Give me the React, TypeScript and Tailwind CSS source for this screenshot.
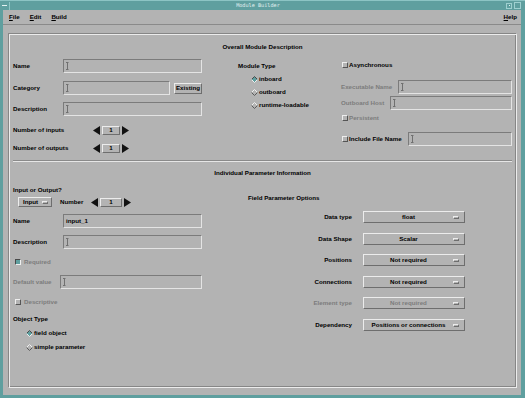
import React from "react";

const DIM = "text-[#7c7c7c]";

function IBeam() {
  return (
    <svg width="3" height="8" viewBox="0 0 3 8" className="ml-[2px] shrink-0">
      <path d="M0 0.5H2.5M1.5 0.5V7.5M0 7.5H2.5" stroke="#707070" strokeWidth="1" fill="none" />
    </svg>
  );
}

function Field({ className, value }: { className: string; value?: string }) {
  return (
    <div
      className={`h-[14px] flex items-center border border-t-[#7b7b7b] border-l-[#7b7b7b] border-b-[#e4e4e4] border-r-[#e4e4e4] ${className}`}
    >
      {value ? <span className="ml-[2px]">{value}</span> : <IBeam />}
    </div>
  );
}

function Radio({ on }: { on?: boolean }) {
  return (
    <svg width="7" height="7" viewBox="0 0 7 7" className="shrink-0">
      <polygon points="3.5,0.5 6.5,3.5 3.5,6.5 0.5,3.5" fill={on ? "#5f9f9f" : "#b3b3b3"} />
      <polyline points="0.5,3.5 3.5,0.5 6.5,3.5" stroke={on ? "#4a4a4a" : "#f0f0f0"} fill="none" />
      <polyline points="0.5,3.5 3.5,6.5 6.5,3.5" stroke={on ? "#f0f0f0" : "#5a5a5a"} fill="none" />
    </svg>
  );
}

function Check({ on }: { on?: boolean }) {
  return (
    <span
      className={`w-[6px] h-[6px] shrink-0 border ${
        on
          ? "bg-[#5f9f9f] border-t-[#4a4a4a] border-l-[#4a4a4a] border-b-[#eeeeee] border-r-[#eeeeee]"
          : "bg-[#b3b3b3] border-t-[#eeeeee] border-l-[#eeeeee] border-b-[#555555] border-r-[#555555]"
      }`}
    />
  );
}

function OptionMenu({ label, className, dim, ind = "mr-[5px]" }: { label: string; className: string; dim?: boolean; ind?: string }) {
  return (
    <div
      className={`flex items-center border border-t-[#ececec] border-l-[#ececec] border-b-[#6e6e6e] border-r-[#6e6e6e] ${className}`}
    >
      <span className={`flex-1 text-center whitespace-nowrap ${dim ? DIM : ""}`}>{label}</span>
      <span className={`w-[6px] h-[3px] shrink-0 border border-t-[#ececec] border-l-[#ececec] border-b-[#6e6e6e] border-r-[#6e6e6e] ${ind}`} />
    </div>
  );
}

function Spin({ box }: { box: string }) {
  return (
    <div className="flex items-center">
      <svg width="7" height="9" viewBox="0 0 7 9">
        <polygon points="7,0 7,9 0,4.5" fill="#111" />
      </svg>
      <div
        className={`ml-[2px] h-[9px] flex items-center justify-center border border-t-[#ececec] border-l-[#ececec] border-b-[#6e6e6e] border-r-[#6e6e6e] ${box}`}
      >
        1
      </div>
      <svg width="7" height="9" viewBox="0 0 7 9" className="ml-[2px]">
        <polygon points="0,0 0,9 7,4.5" fill="#111" />
      </svg>
    </div>
  );
}

function U({ c, rest }: { c: string; rest: string }) {
  return (
    <span>
      <span className="underline underline-offset-[1px]">{c}</span>
      {rest}
    </span>
  );
}

export default function App() {
  return (
    <div className="w-[525px] h-[398px] bg-[#5f9f9f] flex flex-col overflow-hidden font-['Liberation_Sans',Arial,Helvetica,sans-serif] font-bold text-[6.2px] leading-none text-black">
      {/* title bar */}
      <div className="h-[10px] flex items-center shrink-0 border-t border-t-[#8cc4c4]">
        <div className="w-[10px] h-[8px] flex items-center justify-center border-r border-r-[#8cc4c4]">
          <span className="w-[5px] h-[1px] bg-[#e4f2f2]" />
        </div>
        <div className="flex-1 text-center font-['DejaVu_Sans_Mono',monospace] font-normal text-[5.2px] text-[#e2f0f0]">
          Module Builder
        </div>
        <div className="flex items-center gap-[2px] mr-[4px]">
          <span className="w-[6px] h-[6px] border border-[#9fd0d0] flex items-center justify-center">
            <span className="w-[1px] h-[1px] bg-[#e4f2f2]" />
          </span>
          <span className="w-[7px] h-[7px] border border-[#9fd0d0]" />
        </div>
      </div>

      {/* client */}
      <div className="flex-1 ml-[3px] mr-[4px] mb-[3px] bg-[#b3b3b3] flex flex-col">
        {/* menu bar */}
        <div className="h-[15px] shrink-0 flex items-center pl-[6px] pr-[4px] gap-[10px] border-b border-b-[#8a8a8a]">
          <U c="F" rest="ile" />
          <U c="E" rest="dit" />
          <U c="B" rest="uild" />
          <span className="ml-auto">
            <U c="H" rest="elp" />
          </span>
        </div>

        <div className="flex-1 pt-[8px] pl-[5px] pr-[4px] pb-[7px] flex">
          <div className="flex-1 flex flex-col border border-t-[#868686] border-l-[#868686] border-b-[#ececec] border-r-[#ececec] shadow-[inset_1px_1px_0_#ececec,inset_-1px_-1px_0_#868686]">
            {/* Section 1 */}
            <div className="mt-[9px] h-[8px] flex items-center justify-center">Overall Module Description</div>

            <div className="mt-[8px] flex pl-[4px]">
              <div className="w-[189px] flex flex-col">
                <div className="h-[14px] flex items-center">
                  <span className="w-[50px]">Name</span>
                  <Field className="w-[139px]" />
                </div>
                <div className="mt-[8px] h-[14px] flex items-center">
                  <span className="w-[50px]">Category</span>
                  <Field className="w-[107px]" />
                  <div className="ml-[4px] w-[28px] h-[11px] flex items-center justify-center border border-t-[#ececec] border-l-[#ececec] border-b-[#6e6e6e] border-r-[#6e6e6e]">
                    Existing
                  </div>
                </div>
                <div className="mt-[7px] h-[14px] flex items-center">
                  <span className="w-[50px]">Description</span>
                  <Field className="w-[139px]" />
                </div>
                <div className="mt-[9px] h-[10px] flex items-center">
                  <span className="w-[80px]">Number of inputs</span>
                  <Spin box="w-[18px]" />
                </div>
                <div className="mt-[8px] h-[10px] flex items-center">
                  <span className="w-[80px]">Number of outputs</span>
                  <Spin box="w-[18px]" />
                </div>
              </div>

              <div className="ml-[36px] w-[103px] flex flex-col">
                <div className="h-[14px] flex items-center">Module Type</div>
                <div className="h-[13px] flex items-center pl-[13px] gap-[1px]">
                  <Radio on />
                  <span>inboard</span>
                </div>
                <div className="h-[13px] flex items-center pl-[13px] gap-[1px]">
                  <Radio />
                  <span>outboard</span>
                </div>
                <div className="h-[13px] flex items-center pl-[13px] gap-[1px]">
                  <Radio />
                  <span>runtime-loadable</span>
                </div>
              </div>

              <div className="w-[171px] flex flex-col">
                <div className="h-[12px] flex items-center gap-[1px] pl-[1px]">
                  <Check />
                  <span>Asynchronous</span>
                </div>
                <div className="mt-[9px] h-[14px] flex items-center">
                  <span className={`w-[57px] ${DIM}`}>Executable Name</span>
                  <Field className="w-[114px]" />
                </div>
                <div className="mt-[2px] h-[14px] flex items-center">
                  <span className={`w-[49px] ${DIM}`}>Outboard Host</span>
                  <Field className="w-[122px]" />
                </div>
                <div className="mt-[2px] h-[12px] flex items-center gap-[1px] pl-[1px]">
                  <Check />
                  <span className={DIM}>Persistent</span>
                </div>
                <div className="mt-[8px] h-[14px] flex items-center gap-[1px] pl-[1px]">
                  <Check />
                  <span>Include File Name</span>
                  <Field className="ml-auto w-[104px]" />
                </div>
              </div>
            </div>

            <div className="mt-[7px] mx-[4px] h-[2px] border-t border-t-[#8a8a8a] border-b border-b-[#e6e6e6]" />

            {/* Section 2 */}
            <div className="mt-[7px] h-[8px] flex items-center justify-center">Individual Parameter Information</div>

            <div className="mt-[9px] flex pl-[4px]">
              <div className="w-[189px] flex flex-col">
                <div className="h-[8px] flex items-center">Input or Output?</div>
                <div className="mt-[3px] h-[10px] flex items-center">
                  <OptionMenu label="Input" className="ml-[5px] w-[34px] h-[10px]" ind="mr-[3px]" />
                  <span className="ml-[8px] w-[31px]">Number</span>
                  <Spin box="w-[22px]" />
                </div>
                <div className="mt-[7px] h-[14px] flex items-center">
                  <span className="w-[50px]">Name</span>
                  <Field className="w-[139px]" value="input_1" />
                </div>
                <div className="mt-[7px] h-[14px] flex items-center">
                  <span className="w-[50px]">Description</span>
                  <Field className="w-[139px]" />
                </div>
                <div className="mt-[8px] h-[10px] flex items-center pl-[2px] gap-[3px]">
                  <Check on />
                  <span className={DIM}>Required</span>
                </div>
                <div className="mt-[8px] h-[14px] flex items-center">
                  <span className={`w-[47px] ${DIM}`}>Default value</span>
                  <Field className="w-[142px]" />
                </div>
                <div className="mt-[8px] h-[10px] flex items-center pl-[2px] gap-[3px]">
                  <Check />
                  <span className={DIM}>Descriptive</span>
                </div>
                <div className="mt-[8px] h-[8px] flex items-center">Object Type</div>
                <div className="mt-[5px] h-[10px] flex items-center pl-[13px] gap-[1px]">
                  <Radio on />
                  <span>field object</span>
                </div>
                <div className="mt-[4px] h-[10px] flex items-center pl-[13px] gap-[1px]">
                  <Radio />
                  <span>simple parameter</span>
                </div>
              </div>

              <div className="ml-[46px] w-[217px] flex flex-col">
                <div className="mt-[8px] h-[8px] flex items-center">Field Parameter Options</div>
                {[
                  { l: "Data type", v: "float", mt: "mt-[9px]" },
                  { l: "Data Shape", v: "Scalar", mt: "mt-[10px]" },
                  { l: "Positions", v: "Not required", mt: "mt-[9px]" },
                  { l: "Connections", v: "Not required", mt: "mt-[10px]" },
                  { l: "Element type", v: "Not required", mt: "mt-[9px]", dim: true },
                  { l: "Dependency", v: "Positions or connections", mt: "mt-[10px]" },
                ].map((r) => (
                  <div key={r.l} className={`${r.mt} h-[12px] flex items-center`}>
                    <span className={`w-[104px] text-right ${r.dim ? DIM : ""}`}>{r.l}</span>
                    <OptionMenu label={r.v} dim={r.dim} className="ml-[11px] w-[102px] h-[12px]" />
                  </div>
                ))}
              </div>
            </div>
          </div>
        </div>
      </div>
    </div>
  );
}
